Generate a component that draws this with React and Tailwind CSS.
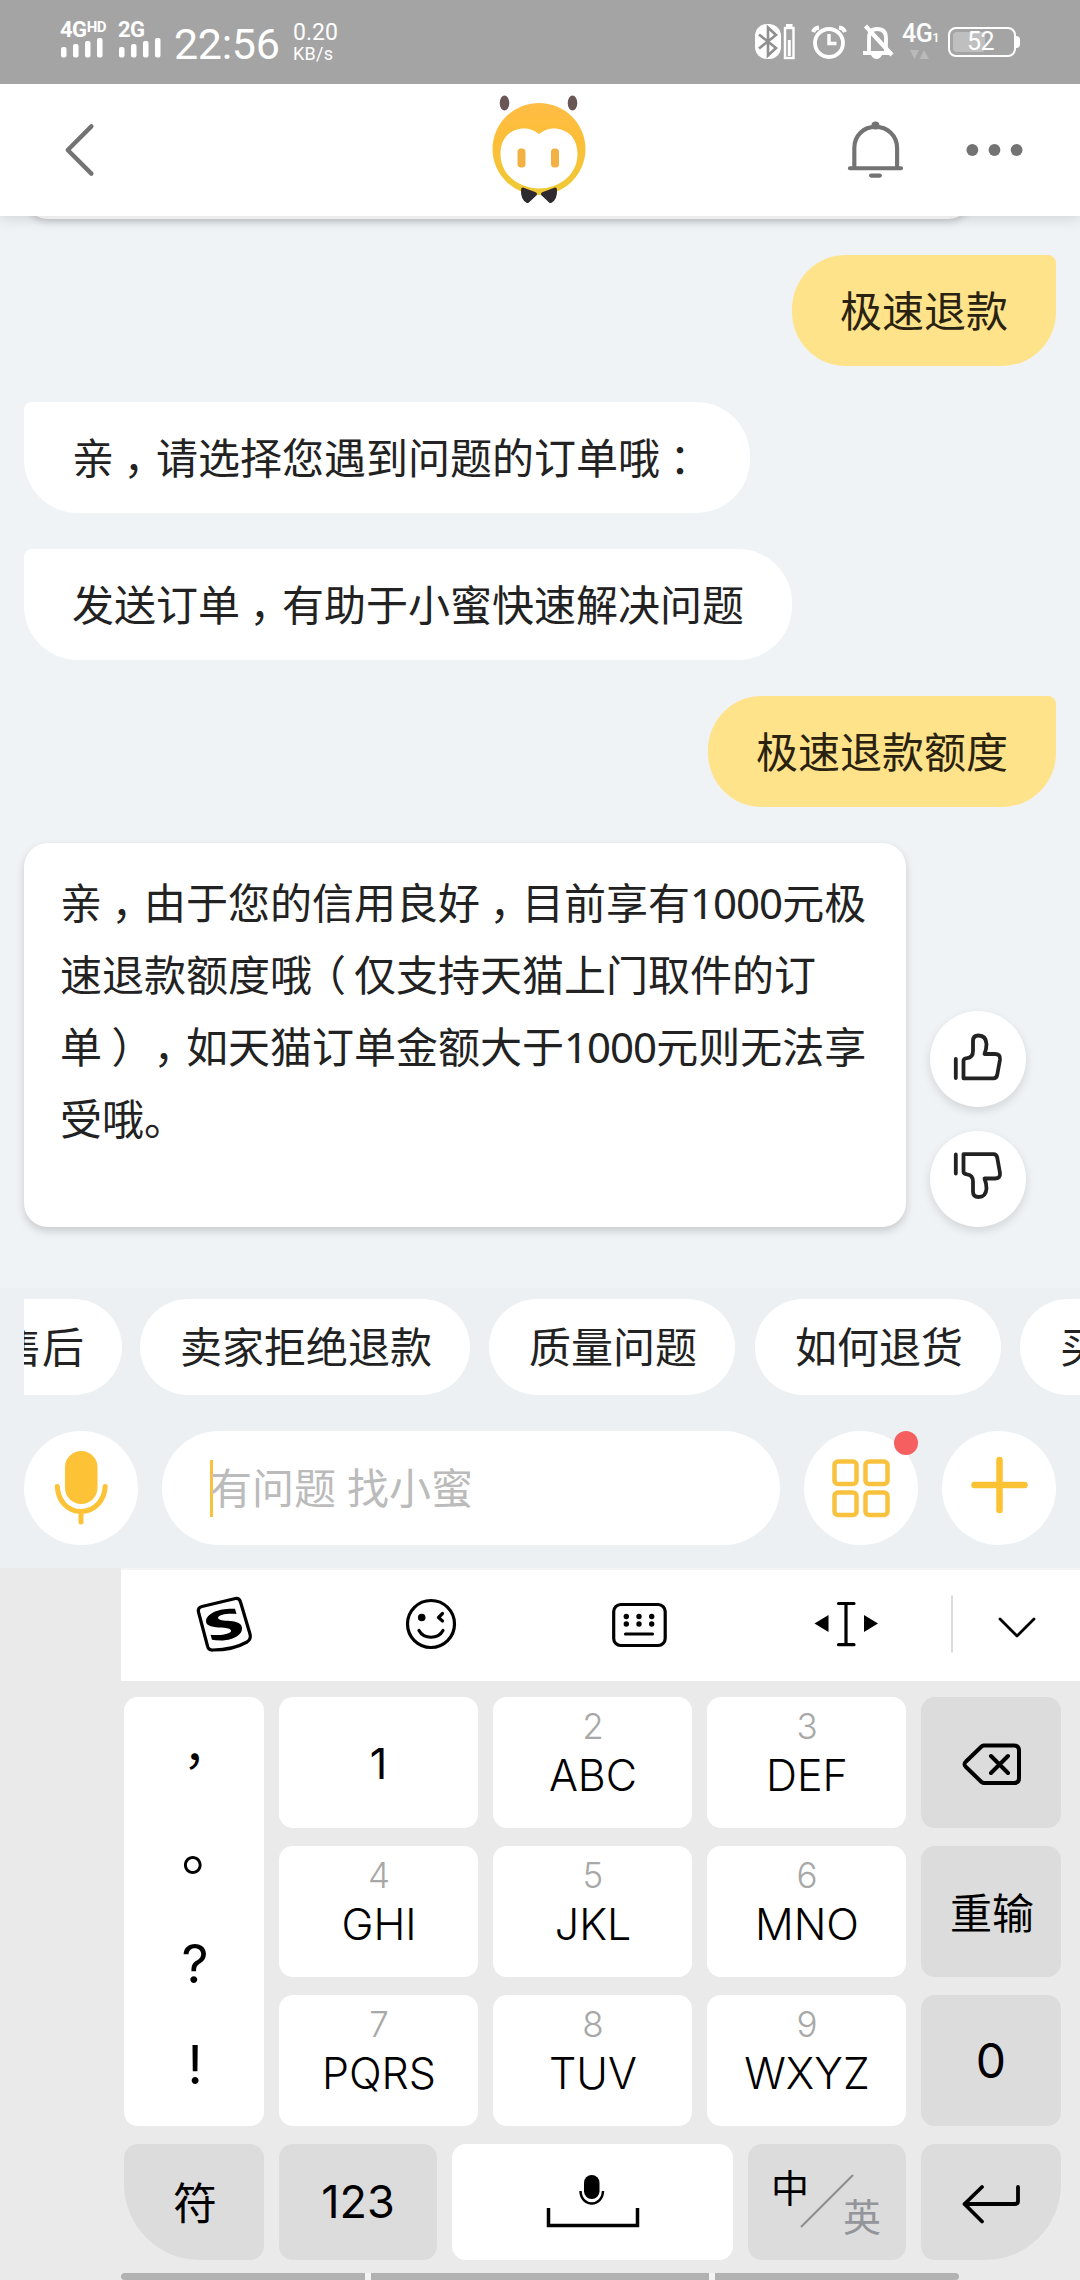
/* Punctuation is set half-width and centred in a full cell; digits are set slightly tight */
function T({ children }) {
  return children.split(/([，：（）]|\d+)/).map((s, i) => {
    if (s === "（")
      return (
        <span key={i} className="inline-block w-[42px] pl-[5px] text-center [font-feature-settings:'halt']">
          {s}
        </span>
      );
    if (/^[，：）]$/.test(s))
      return (
        <span key={i} className="inline-block w-[42px] pr-[2px] text-center [font-feature-settings:'halt']">
          {s}
        </span>
      );
    if (/^\d+$/.test(s))
      return (
        <span key={i} className="tracking-[-1px]">
          {s}
        </span>
      );
    return s;
  });
}

function Signal() {
  return (
    <svg className="block" width="44" height="20" viewBox="0 0 44 20" fill="#fff">
      <rect x="1" y="9" width="5.5" height="10.5" rx="2" />
      <rect x="13" y="6" width="5.5" height="13.5" rx="2" />
      <rect x="25" y="3" width="5.5" height="16.5" rx="2" />
      <rect x="37" y="0" width="5.5" height="19.5" rx="2" />
    </svg>
  );
}

function StatusBar() {
  return (
    <div className="relative z-20 flex h-[84px] items-start justify-between bg-[#a4a4a4] pr-[60px] pl-[60px] font-[Roboto,sans-serif] text-white">
      <div className="flex">
        <div className="mt-[19px] w-[58px]">
          <div className="flex h-[19px] items-start text-[22px] leading-[22px] font-bold tracking-[-0.5px]">
            4G<span className="text-[15px] leading-[16px]">HD</span>
          </div>
          <Signal />
        </div>
        <div className="mt-[19px] w-[56px]">
          <div className="h-[19px] text-[22px] leading-[22px] font-bold tracking-[-0.5px]">2G</div>
          <Signal />
        </div>
        <div className="mt-[23px] w-[119px] text-[43px] leading-[42px] tracking-[-0.3px]">22:56</div>
        <div className="mt-[22px]">
          <div className="text-[23px] leading-[22px]">0.20</div>
          <div className="text-[18px] leading-[20px] tracking-[0.3px]">KB/s</div>
        </div>
      </div>
      <div className="mt-[22px] flex">
        <svg width="42" height="38" viewBox="0 0 42 38" fill="none">
          <rect x="1" y="2" width="26" height="35" rx="12" fill="#fff" />
          <path d="M5 12.5L22 26L14 33.5V5.5L22 13L5 26.5" stroke="#8f8f8f" strokeWidth="2.6" />
          <rect x="31" y="6" width="8.5" height="30" stroke="#fff" strokeWidth="2.4" />
          <path d="M32 3.5H38.500M35.300 18V34" stroke="#fff" strokeWidth="3" />
        </svg>
        <svg className="ml-[15px]" width="36" height="38" viewBox="0 0 36 38" fill="none" stroke="#fff">
          <circle cx="18" cy="21" r="14" strokeWidth="3.8" />
          <path d="M18 12V21.500H25.500" strokeWidth="3.4" />
          <path d="M2 10Q3.500 6 8 5.500M34 10Q32.500 6 28 5.500" strokeWidth="4" />
        </svg>
        <svg className="ml-[15px]" width="34" height="38" viewBox="0 0 34 38" fill="none" stroke="#fff">
          <path d="M7 29V16Q7 7 15 7Q24 7 24 16V29" strokeWidth="3.8" />
          <path d="M1 31H30M3.500 4L30 33" strokeWidth="4.2" />
          <path d="M9 33Q11 37 14.500 37Q18 37 20 33Z" fill="#fff" stroke="none" />
        </svg>
        <div className="mt-[2px] ml-[6px] w-[46px]">
          <div className="flex h-[24px] items-end text-[25px] leading-[28px] font-medium tracking-[-0.5px]">
            4G<span className="text-[13px] leading-[20px]">1</span>
          </div>
          <svg className="ml-[8px] block" width="20" height="12" viewBox="0 0 20 12" fill="#b9b9b9">
            <path d="M0 2H9L4.500 11ZM9.500 11H19L14 2Z" />
          </svg>
        </div>
        <div className="mt-[5px] flex h-[30px] items-center">
          <div className="h-[30px] w-[68px] rounded-[8px] border-2 border-white p-[3px]">
            <div className="flex h-full w-[32px] items-center rounded-[4px] bg-[#bfbfbf] pl-[14px] text-[25px] tracking-[-0.5px]">52</div>
          </div>
          <div className="h-[12px] w-[4px] rounded-r-full bg-white" />
        </div>
      </div>
    </div>
  );
}

function Mascot() {
  return (
    <svg width="108" height="120" viewBox="486 90 108 120">
      <defs>
        <linearGradient id="face" x1="0" y1="0" x2="0" y2="1">
          <stop offset="0" stopColor="#ffbd45" />
          <stop offset="0.4" stopColor="#fcbe38" />
          <stop offset="1" stopColor="#efca36" />
        </linearGradient>
      </defs>
      <ellipse cx="505.500" cy="103" rx="4.800" ry="7.500" fill="#6b5656" />
      <ellipse cx="573.500" cy="103" rx="4.800" ry="7.500" fill="#6b5656" />
      <ellipse cx="540" cy="149" rx="46.500" ry="46" fill="url(#face)" />
      <path d="M540 134C546 129 552 128 557 128.500C571 130 578.500 140 578.500 154C578.500 175 560 188.500 540 188.500C520 188.500 501.500 175 501.500 154C501.500 140 509 130 523 128.500C528 128 534 129 540 134Z" fill="#fff" />
      <rect x="518.500" y="148.500" width="8" height="19" rx="3.500" fill="#f3b144" />
      <rect x="552" y="148.500" width="8" height="19" rx="3.500" fill="#f3b144" />
      <path d="M524 189.500L536 194L528.500 201Q523.500 198 524 189.500ZM556 189.500L544 194L551.500 201Q556.500 198 556 189.500Z" fill="#2f2930" stroke="#2f2930" strokeWidth="4" strokeLinejoin="round" />
    </svg>
  );
}

function Header() {
  return (
    <div className="relative z-10 flex h-[132px] items-center bg-white px-[54px] shadow-[0_2px_14px_rgba(0,0,0,0.14)]">
      <svg width="52" height="64" viewBox="54 118 52 64" fill="none" stroke="#737373" strokeWidth="4.500" strokeLinecap="round" strokeLinejoin="round">
        <path d="M92 126L68 150L92 174" />
      </svg>
      <div className="ml-[380px]">
        <Mascot />
      </div>
      <svg className="ml-[251px]" width="64" height="64" viewBox="844 118 64 64" fill="none" stroke="#737373" strokeWidth="4.200" strokeLinecap="round">
        <path d="M854.500 168V148C854.500 135 864 126.500 876 126.500C888 126.500 898 135 898 148V168M850 168.500H902M871.500 176H880.500" />
        <circle cx="876" cy="125" r="2" fill="#737373" />
      </svg>
      <svg className="ml-[56px]" width="64" height="20" viewBox="0 0 64 20" fill="#737373">
        <circle cx="9.500" cy="10" r="6" />
        <circle cx="32" cy="10" r="6" />
        <circle cx="54.500" cy="10" r="6" />
      </svg>
    </div>
  );
}

function Mine({ children }) {
  return (
    <div className="flex h-[111px] items-center self-end rounded-[54px] rounded-tr-[8px] bg-[#fee38b] px-[48px] text-[#2a2210]">
      {children}
    </div>
  );
}

function Theirs({ children }) {
  return (
    <div className="flex h-[111px] items-center self-start rounded-[54px] rounded-tl-[8px] bg-white px-[48px]">
      <div>
        <T>{children}</T>
      </div>
    </div>
  );
}

function Thumb({ down }) {
  return (
    <div className="size-[96px] rounded-full bg-white shadow-[0_4px_10px_rgba(0,0,0,0.12)]">
      <svg width="96" height="96" viewBox="0 0 96 96" fill="none" stroke="#222" strokeWidth="3.800" strokeLinecap="round" strokeLinejoin="round">
        <g transform={down ? "translate(0 90.5) scale(1 -1)" : undefined}>
          <path d="M25.800 48V67M33.500 67.300V50Q33.500 47.500 37 47.200Q43 46.500 43 40V30Q43 24.500 48.500 24.500Q56 24.500 56.500 33Q56.500 38 54.500 43H65Q70.500 43 70 48.500L67.200 64Q66.500 67.300 63.500 67.300Z" />
        </g>
      </svg>
    </div>
  );
}

const lines = [
  "亲，由于您的信用良好，目前享有1000元极",
  "速退款额度哦（仅支持天猫上门取件的订",
  "单），如天猫订单金额大于1000元则无法享",
  "受哦。",
];

function Chat() {
  return (
    <div className="h-[1072px] overflow-hidden bg-[#f0f3f6] px-[24px]">
      <div className="-mt-[40px] h-[43px] w-[948px] rounded-b-[24px] bg-white shadow-[0_3px_6px_rgba(0,0,0,0.16)]" />
      <div className="mt-[36px] flex flex-col gap-[36px]">
        <Mine>极速退款</Mine>
        <Theirs>亲，请选择您遇到问题的订单哦：</Theirs>
        <Theirs>发送订单，有助于小蜜快速解决问题</Theirs>
        <Mine>极速退款额度</Mine>
        <div className="flex items-end gap-[24px]">
          <div className="h-[384px] w-[882px] rounded-[24px] bg-white px-[36px] pt-[24px] shadow-[0_4px_8px_rgba(0,0,0,0.17)]">
            {lines.map((l) => (
              <div key={l} className="h-[72px] leading-[72px]">
                <T>{l}</T>
              </div>
            ))}
          </div>
          <div className="flex flex-col gap-[24px]">
            <Thumb />
            <Thumb down />
          </div>
        </div>
      </div>
    </div>
  );
}

function Chip({ children }) {
  return <div className="flex h-[96px] shrink-0 items-center rounded-full bg-white pr-[38px] pl-[40px]">{children}</div>;
}

function Composer() {
  return (
    <div className="h-[280px] bg-[#ecf0f3] pt-[11px] pl-[24px]">
      <div className="flex overflow-hidden">
        <div className="mr-[18px] flex w-[98px] shrink-0 justify-end overflow-hidden">
          <Chip>售后</Chip>
        </div>
        <div className="flex shrink-0">
          <Chip>卖家拒绝退款</Chip>
          <div className="ml-[19px]"><Chip>质量问题</Chip></div>
          <div className="ml-[20px]"><Chip>如何退货</Chip></div>
          <div className="ml-[19px]"><Chip>买</Chip></div>
        </div>
      </div>
      <div className="mt-[36px] flex gap-[24px]">
        <div className="size-[114px] rounded-full bg-white">
          <svg width="114" height="114" viewBox="24 1431 114 114" fill="none" stroke="#fdc235" strokeWidth="5" strokeLinecap="round">
            <rect x="65" y="1451" width="32.500" height="53" rx="16.200" fill="#fdc235" stroke="none" />
            <path d="M57.300 1486.500C58 1500 67 1511.500 81 1511.500C95 1511.500 104.500 1500 105.200 1486.500M81 1512V1522" />
          </svg>
        </div>
        <div className="flex h-[114px] w-[618px] items-center rounded-full bg-white pl-[48px]">
          <div className="h-[57px] w-[3px] bg-[#f9c23e]" />
          <div className="-ml-[3px] text-[#bbb]">有问题 找小蜜</div>
        </div>
        <div className="relative size-[114px] rounded-full bg-white">
          <svg width="114" height="114" viewBox="804 1431 114 114" fill="none" stroke="#f9c23e" strokeWidth="4.500">
            <rect x="834.500" y="1461.500" width="22" height="22.500" rx="3.500" />
            <rect x="865.500" y="1461.500" width="22" height="22.500" rx="3.500" />
            <rect x="834.500" y="1492.500" width="22" height="22.500" rx="3.500" />
            <rect x="865.500" y="1492.500" width="22" height="22.500" rx="3.500" />
          </svg>
          <div className="absolute top-0 right-0 size-[24px] rounded-full bg-[#f55f60]" />
        </div>
        <div className="size-[114px] rounded-full bg-white">
          <svg width="114" height="114" viewBox="942 1431 114 114" stroke="#fbc334" strokeWidth="6.500" strokeLinecap="round">
            <path d="M999.500 1460V1510M974.500 1485H1024.500" />
          </svg>
        </div>
      </div>
    </div>
  );
}

function Toolbar() {
  return (
    <div className="ml-[121px] h-[113px] border-t-2 border-[#f5f5f5] bg-white">
      <svg className="block" width="959" height="111" viewBox="121 1570 959 111" fill="none" stroke="#000" strokeWidth="3.200" strokeLinecap="round" strokeLinejoin="round">
        <path d="M202 1606.500L235.500 1598.500Q239.500 1598 240.500 1602L250 1634Q251.500 1639 247 1642Q233 1650 213 1650Q208.500 1650.500 207.500 1646L198.500 1612Q197.500 1607.500 202 1606.500Z" />
        <path d="M235 1608.800L236.500 1614C228 1613 219 1614.500 218 1617.500C218 1620.500 224 1620.500 230 1621C238 1621.500 242 1624 242 1628.500C242 1636 231 1640.500 221 1640.500Q215 1640.500 212 1639.800L210.500 1634.800C217 1635.500 228 1635 231 1631.500C231.500 1628 226 1628 219 1627.500C210 1627 206 1625 206 1621C206.500 1613 220 1608 235 1608.800Z" fill="#000" stroke="none" />
        <circle cx="431" cy="1624" r="23.500" />
        <circle cx="421.700" cy="1617.500" r="3.800" fill="#000" stroke="none" />
        <path d="M442.500 1613.500L438.500 1617.500L442.500 1621M419 1630.500C424 1639.500 438 1639.500 443 1630.500" />
        <rect x="613.700" y="1604.500" width="51.500" height="41" rx="7" />
        <path d="M625.500 1634H652.500" />
        <g fill="#000" stroke="none">
          <circle cx="626.300" cy="1616.500" r="2.700" />
          <circle cx="639" cy="1616.500" r="2.700" />
          <circle cx="651.700" cy="1616.500" r="2.700" />
          <circle cx="626.300" cy="1624" r="2.700" />
          <circle cx="639" cy="1624" r="2.700" />
          <circle cx="651.700" cy="1624" r="2.700" />
          <path d="M814.500 1623.500L828.500 1615V1632ZM878 1623.500L864 1615V1632Z" />
        </g>
        <path d="M838.500 1603.500H854M838.500 1644.700H854M846 1603.500V1644.700" />
        <path d="M952 1596V1652" stroke="#cfcfcf" strokeWidth="1.500" />
        <path d="M1000 1619L1017 1636L1034 1619" strokeWidth="2.800" />
      </svg>
    </div>
  );
}

function Key({ n, t }) {
  return (
    <div className="flex h-[131px] w-[199px] flex-col items-center rounded-[14px] bg-white pt-[12px] pl-[1px] font-[350]">
      <div className="text-[35px] leading-[34px] font-light text-[#a8a8a8]">{n}</div>
      <div className="mt-[11px] text-[43px] leading-[42px]">{t}</div>
    </div>
  );
}

const GREY = "flex items-center justify-center bg-[#dcdcdc]";

function Keyboard() {
  return (
    <div className="h-[712px] overflow-hidden bg-[#eaeaea] font-[Inter,'Noto_Sans_CJK_SC',sans-serif] text-black">
      <Toolbar />
      <div className="mt-[16px] ml-[124px] flex gap-[15px]">
        <div className="flex h-[429px] w-[140px] flex-col items-center justify-center rounded-[14px] bg-white pt-[4px] pl-[2px] text-[53px] font-normal">
          <div className="flex h-[101px] items-center"><span className="-translate-y-[15px] text-[48px] leading-none [font-feature-settings:'halt']">，</span></div>
          <div className="flex h-[101px] items-center"><span className="translate-x-[1px] -translate-y-[14px] text-[58px] leading-none [font-feature-settings:'halt']">。</span></div>
          <div className="flex h-[101px] items-center">?</div>
          <div className="flex h-[101px] items-center">!</div>
        </div>
        <div className="grid grid-cols-[199px_199px_199px] gap-x-[15px] gap-y-[18px]">
          <div className="flex h-[131px] items-center justify-center rounded-[14px] bg-white text-[43px] font-[370]">1</div>
          <Key n="2" t="ABC" />
          <Key n="3" t="DEF" />
          <Key n="4" t="GHI" />
          <Key n="5" t="JKL" />
          <Key n="6" t="MNO" />
          <Key n="7" t="PQRS" />
          <Key n="8" t="TUV" />
          <Key n="9" t="WXYZ" />
        </div>
        <div className="flex flex-col gap-[18px]">
          <div className={`${GREY} h-[131px] w-[140px] rounded-[14px]`}>
            <svg width="140" height="131" viewBox="921 1697 140 131" fill="none" stroke="#000" strokeWidth="4" strokeLinecap="round" strokeLinejoin="round">
              <path d="M984 1745.500H1014Q1019 1745.500 1019 1750.500V1778Q1019 1783 1014 1783H984Q983 1783 981.500 1782L966 1767Q963 1764 966 1761.500L981.500 1746.500Q983 1745.500 984 1745.500ZM991 1756L1008 1773M1008 1756L991 1773" />
            </svg>
          </div>
          <div className={`${GREY} h-[131px] w-[140px] rounded-[14px] pt-[4px] pl-[2px] text-[42px]`}>重输</div>
          <div className={`${GREY} h-[131px] w-[140px] rounded-[14px] text-[48px] font-[380]`}>0</div>
        </div>
      </div>
      <div className="mt-[18px] ml-[124px] flex gap-[15px]">
        <div className={`${GREY} h-[116px] w-[140px] rounded-[14px] rounded-bl-[76px] pt-[3px] pl-[2px] text-[44px]`}>符</div>
        <div className={`${GREY} h-[116px] w-[158px] rounded-[14px] text-[45px] font-[380]`}>123</div>
        <div className="h-[116px] w-[281px] rounded-[14px] bg-white">
          <svg width="281" height="116" viewBox="452 2144 281 116" fill="none" stroke="#000" strokeWidth="3.500">
            <rect x="584" y="2175" width="15.500" height="24" rx="7.700" fill="#000" stroke="none" />
            <path d="M580.500 2191C581 2207.500 602.500 2207.500 603 2191" strokeWidth="2.500" />
            <path d="M548.500 2208V2225.500H637.500V2208" />
          </svg>
        </div>
        <div className="relative h-[116px] w-[158px] rounded-[14px] bg-[#dcdcdc]">
          <svg width="158" height="116" viewBox="748 2144 158 116">
            <path d="M801 2227L853 2175" stroke="#8f8f8f" strokeWidth="2.200" />
          </svg>
          <span className="absolute top-[25px] left-[23px] text-[38px] leading-[38px]">中</span>
          <span className="absolute top-[54px] left-[95px] text-[38px] leading-[38px] text-[#93959b]">英</span>
        </div>
        <div className={`${GREY} h-[116px] w-[140px] rounded-[14px] rounded-br-[76px]`}>
          <svg width="140" height="116" viewBox="921 2144 140 116" fill="none" stroke="#000" strokeWidth="3.800" strokeLinecap="round" strokeLinejoin="round">
            <path d="M982 2187L964.500 2204L982 2221.500M964.500 2204H1015Q1018 2204 1018 2201V2187" />
          </svg>
        </div>
      </div>
      <div className="mt-[13px] ml-[121px] flex h-[7px] w-[838px] justify-between rounded-l-full rounded-r-full bg-[#f3f3f3]">
        <div className="w-[244px] rounded-l-full bg-[#b2b2b2]" />
        <div className="w-[338px] bg-[#b2b2b2]" />
        <div className="w-[244px] rounded-r-full bg-[#b2b2b2]" />
      </div>
    </div>
  );
}

export default function App() {
  return (
    <div className="h-[2280px] w-[1080px] overflow-hidden font-['Noto_Sans','Noto_Sans_CJK_SC',sans-serif] text-[42px] leading-[60px] whitespace-nowrap text-[#222]">
      <StatusBar />
      <Header />
      <Chat />
      <Composer />
      <Keyboard />
    </div>
  );
}
